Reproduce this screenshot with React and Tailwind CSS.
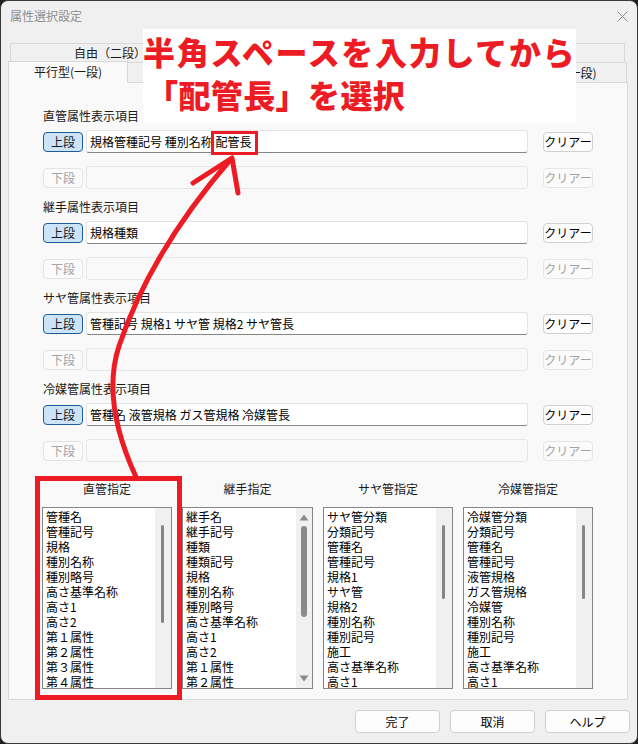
import React from "react";

const RED = "#ed1c24";

const sections = [
  { label: "直管属性表示項目", value: "規格管種記号 種別名称 配管長" },
  { label: "継手属性表示項目", value: "規格種類" },
  { label: "サヤ管属性表示項目", value: "管種記号 規格1 サヤ管 規格2 サヤ管長" },
  { label: "冷媒管属性表示項目", value: "管種名 液管規格 ガス管規格 冷媒管長" },
];

const lists = [
  {
    title: "直管指定",
    items: ["管種名", "管種記号", "規格", "種別名称", "種別略号", "高さ基準名称", "高さ1", "高さ2", "第１属性", "第２属性", "第３属性", "第４属性"],
    kind: "thin",
    thumbTop: 17,
    thumbH: 98,
  },
  {
    title: "継手指定",
    items: ["継手名", "継手記号", "種類", "種類記号", "規格", "種別名称", "種別略号", "高さ基準名称", "高さ1", "高さ2", "第１属性", "第２属性"],
    kind: "hover",
    thumbTop: 18,
    thumbH: 91,
  },
  {
    title: "サヤ管指定",
    items: ["サヤ管分類", "分類記号", "管種名", "管種記号", "規格1", "サヤ管", "規格2", "種別名称", "種別記号", "施工", "高さ基準名称", "高さ1"],
    kind: "thin",
    thumbTop: 17,
    thumbH: 74,
  },
  {
    title: "冷媒管指定",
    items: ["冷媒管分類", "分類記号", "管種名", "管種記号", "液管規格", "ガス管規格", "冷媒管", "種別名称", "種別記号", "施工", "高さ基準名称", "高さ1"],
    kind: "thin",
    thumbTop: 17,
    thumbH: 74,
  },
];

function Row({ active, name, value }) {
  return (
    <div className="flex h-[23px] items-center">
      {active ? (
        <div className="flex h-[20px] w-[40px] items-center justify-center rounded-[4px] border border-[#1f5c99] bg-[#cce4f7] text-[12px] leading-none text-[#1a1a1a]">
          {name}
        </div>
      ) : (
        <div className="flex h-[20px] w-[40px] items-center justify-center rounded-[4px] border border-[#e3e3e3] bg-[#fbfbfb] text-[12px] leading-none text-[#a3a3a3]">
          {name}
        </div>
      )}
      {active ? (
        <div className="ml-[3px] flex h-[23px] w-[442px] items-center rounded-[3px] border border-[#e3e3e3] border-b-[#868686] bg-white pl-[3px] text-[12px] text-black whitespace-pre">
          {value}
        </div>
      ) : (
        <div className="ml-[3px] h-[23px] w-[442px] rounded-[3px] border border-[#e6e6e6] bg-[#f9f9f9]" />
      )}
      {active ? (
        <div className="ml-[15px] flex h-[20px] w-[50px] items-center justify-center rounded-[4px] border border-[#d0d0d0] bg-[#fdfdfd] text-[12px] leading-none text-black">
          クリアー
        </div>
      ) : (
        <div className="ml-[15px] flex h-[20px] w-[50px] items-center justify-center rounded-[4px] border border-[#e6e6e6] bg-[#fbfbfb] text-[12px] leading-none text-[#a3a3a3]">
          クリアー
        </div>
      )}
    </div>
  );
}

function ListBox({ list }) {
  return (
    <div className="flex flex-col">
      <div className="h-[16px] text-center text-[12px] leading-[16px] text-[#1a1a1a]">{list.title}</div>
      <div className="relative mt-[10px] h-[182px] overflow-hidden border border-[#858585] bg-white">
        <div className="pl-[3px] pt-[1px]">
          {list.items.map((it, i) => (
            <div key={i} className="h-[15px] whitespace-nowrap text-[12px] leading-[15px] text-black">
              {it}
            </div>
          ))}
        </div>
        <div className="absolute bottom-0 right-0 top-0 w-[16px] bg-[#f0f0f0]">
          {list.kind === "hover" ? (
            <>
              <svg className="absolute left-[3px] top-[6px]" width="10" height="7" viewBox="0 0 10 7">
                <path d="M5 0.5 L9.5 6.5 L0.5 6.5 Z" fill="#8a8a8a" />
              </svg>
              <div
                className="absolute left-[5px] w-[6px] rounded-[3px] bg-[#8a8a8a]"
                style={{ top: list.thumbTop, height: list.thumbH }}
              />
              <svg className="absolute bottom-[6px] left-[3px]" width="10" height="7" viewBox="0 0 10 7">
                <path d="M0.5 0.5 L9.5 0.5 L5 6.5 Z" fill="#8a8a8a" />
              </svg>
            </>
          ) : (
            <div
              className="absolute left-[6px] w-[3px] rounded-[2px] bg-[#858585]"
              style={{ top: list.thumbTop, height: list.thumbH }}
            />
          )}
        </div>
      </div>
    </div>
  );
}

export default function App() {
  return (
    <div className="h-[744px] w-[638px] bg-[#1f1f1f] font-['Noto_Sans_CJK_JP',sans-serif]">
      <div className="relative h-[744px] w-[638px] overflow-hidden rounded-[8px] border border-[#3a3a3a] bg-[#f0f0f0]">
        {/* title bar */}
        <div className="flex h-[30px] items-center justify-between pl-[9px] pr-[9px]">
          <div className="text-[12px] text-[#8f8f8f]">属性選択設定</div>
          <svg width="11" height="11" viewBox="0 0 11 11">
            <path d="M0.5 0.5 L10.5 10.5 M10.5 0.5 L0.5 10.5" stroke="#8a8a8a" strokeWidth="1" />
          </svg>
        </div>

        {/* back tab row */}
        <div className="ml-[9px] mt-[12px] flex h-[19px]">
          <div className="flex w-[200px] items-center justify-center border border-b-0 border-[#d9d9d9] bg-[#f0f0f0] text-[12px] text-[#1a1a1a]">
            自由（二段）
          </div>
          <div className="flex w-[415px] items-center justify-center border border-b-0 border-l-0 border-[#d9d9d9] bg-[#f0f0f0] text-[12px] text-[#1a1a1a]">
            平行型（二段）
          </div>
        </div>

        {/* front tab row */}
        <div className="ml-[7px] flex h-[20px] items-start">
          <div className="relative z-10 -mt-px flex h-[22px] w-[120px] items-center justify-center border border-b-0 border-[#d9d9d9] bg-[#f9f9f9] pb-[1px] text-[12px] text-[#1a1a1a]">
            平行型(一段)
          </div>
          <div className="flex h-[20px] w-[383px] items-center justify-center border-t border-r border-[#d9d9d9] bg-[#f0f0f0] text-[12px] text-[#1a1a1a]">
            自由(二段)
          </div>
          <div className="flex h-[20px] w-[116px] items-center justify-center border-t border-r border-[#d9d9d9] bg-[#f0f0f0] text-[12px] text-[#1a1a1a]">
            自由(一段)
          </div>
        </div>

        {/* panel */}
        <div className="ml-[7px] h-[618px] w-[620px] border border-[#d9d9d9] bg-[#f9f9f9] pl-[34px] pt-[25px]">
          {sections.map((s, i) => (
            <div key={i} className={i === 0 ? "" : "mt-[10px]"}>
              <div className="h-[16px] text-[12px] leading-[16px] text-[#1a1a1a]">{s.label}</div>
              <div className="mt-[6px]">
                <Row active name="上段" value={s.value} />
              </div>
              <div className="mt-[13px]">
                <Row name="下段" />
              </div>
            </div>
          ))}

          <div className="-ml-px mt-[19px] grid grid-cols-[130px_131px_130px_130px] gap-x-[10px]">
            {lists.map((l, i) => (
              <ListBox key={i} list={l} />
            ))}
          </div>
        </div>

        {/* bottom buttons */}
        <div className="mt-[10px] flex justify-end gap-[10px] pr-[7px]">
          {["完了", "取消", "ヘルプ"].map((t) => (
            <div
              key={t}
              className="flex h-[23px] w-[85px] items-center justify-center rounded-[4px] border border-[#d0d0d0] bg-[#fdfdfd] text-[12px] text-black"
            >
              {t}
            </div>
          ))}
        </div>

        {/* annotation overlay */}
        <div className="absolute left-[142px] top-[28px] h-[94px] w-[433px] bg-white pt-[1px]">
          <div className="whitespace-nowrap text-[32px] font-black leading-[43px] tracking-[1.7px] text-[#ed1c24]">
            半角スペースを入力してから
          </div>
          <div className="ml-[3px] whitespace-nowrap text-[32px] font-black leading-[43px] tracking-[0.4px] text-[#ed1c24]">
            「配管長」を選択
          </div>
        </div>

        <div className="absolute left-[210px] top-[130px] h-[24px] w-[47px] border-[3px] border-[#ed1c24]" />
        <div className="absolute left-[34px] top-[475px] h-[224px] w-[147px] border-[5px] border-[#ed1c24]" />

        <svg className="pointer-events-none absolute left-0 top-0" width="638" height="744" viewBox="0 0 638 744">
          <path
            d="M135 476 Q100 400 118 345 Q150 250 230 158"
            fill="none"
            stroke={RED}
            strokeWidth="5"
            strokeLinecap="round"
          />
          <path d="M192 182 L231 157 L237 192" fill="none" stroke={RED} strokeWidth="5" strokeLinecap="round" strokeLinejoin="round" />
        </svg>
      </div>
    </div>
  );
}
